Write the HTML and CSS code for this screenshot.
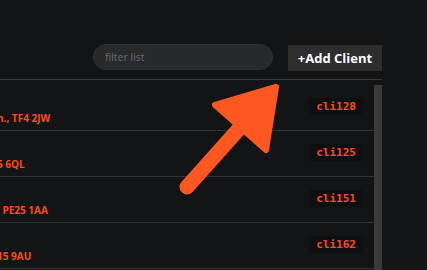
FILE: index.html
```html
<!DOCTYPE html>
<html>
<head>
<meta charset="utf-8">
<link rel="stylesheet" href="styles.css">
</head>
<body>
<div class="panel">
  <div class="toolbar">
    <input class="filter" type="text" placeholder="filter list">
    <button class="add-btn">+Add Client</button>
  </div>
  <div class="list-wrap">
    <ul class="list">
      <li class="row"><span class="addr">h., TF4 2JW</span><code class="cid">cli128</code></li>
      <li class="row"><span class="addr">5 6QL</span><code class="cid">cli125</code></li>
      <li class="row"><span class="addr">. PE25 1AA</span><code class="cid">cli151</code></li>
      <li class="row"><span class="addr">15 9AU</span><code class="cid">cli162</code></li>
    </ul>
    <div class="scrollbar"></div>
  </div>
</div>
<svg class="arrow" width="427" height="270" viewBox="0 0 427 270">
  <line x1="187" y1="187" x2="246" y2="121" stroke="#ff5722" stroke-width="15" stroke-linecap="round"/>
  <polygon points="276,87 215,105 266,150" fill="#ff5722" stroke="#ff5722" stroke-width="6" stroke-linejoin="round"/>
</svg>
</body>
</html>
```
FILE: styles.css
```css
html, body {
  margin: 0;
  padding: 0;
  background: #131416;
  overflow: hidden;
  height: 270px;
  font-family: "Open Sans", "Liberation Sans", sans-serif;
}
.panel {
  width: 382px;
}
.toolbar {
  height: 45px;
  padding-top: 34px;
  display: flex;
  justify-content: flex-end;
  align-items: center;
  gap: 15px;
  border-bottom: 1px solid #3a3a3c;
}
.filter {
  box-sizing: border-box;
  width: 180px;
  height: 26px;
  border-radius: 13px;
  border: 1px solid #2f3033;
  background: #28292b;
  color: #ccc;
  padding: 0 11px;
  font-family: "Open Sans", "Liberation Sans", sans-serif;
  font-size: 10.5px;
  outline: none;
}
.filter::placeholder {
  color: #6b6c6e;
}
.add-btn {
  box-sizing: border-box;
  width: 94px;
  height: 26px;
  margin-top: 2px;
  border: none;
  background: #2d2d2e;
  color: #fff;
  font-family: "Open Sans", "Liberation Sans", sans-serif;
  font-weight: 700;
  font-size: 13px;
  padding: 0;
}
.list-wrap {
  display: flex;
  margin-top: 5px;
  height: 200px;
}
.list {
  list-style: none;
  margin: 0;
  padding: 0;
  width: 374px;
}
.row {
  height: 45px;
  border-bottom: 1px solid #333436;
  display: flex;
  justify-content: space-between;
}
.addr {
  align-self: flex-end;
  padding-bottom: 6px;
  margin-left: -3px;
  font-size: 10px;
  line-height: 12px;
  font-weight: 700;
  color: #ff4a1e;
  white-space: nowrap;
}
.cid {
  align-self: flex-start;
  margin-top: 13px;
  margin-right: 11px;
  height: 17px;
  line-height: 17px;
  padding: 0 7px;
  background: #0e0f10;
  color: #ff4a1e;
  font-family: "DejaVu Sans Mono", "Liberation Mono", monospace;
  font-weight: 700;
  font-size: 11px;
}
.scrollbar {
  width: 8px;
  background: #3a3a3b;
}
.arrow {
  position: absolute;
  left: 0;
  top: 0;
  pointer-events: none;
}
```
